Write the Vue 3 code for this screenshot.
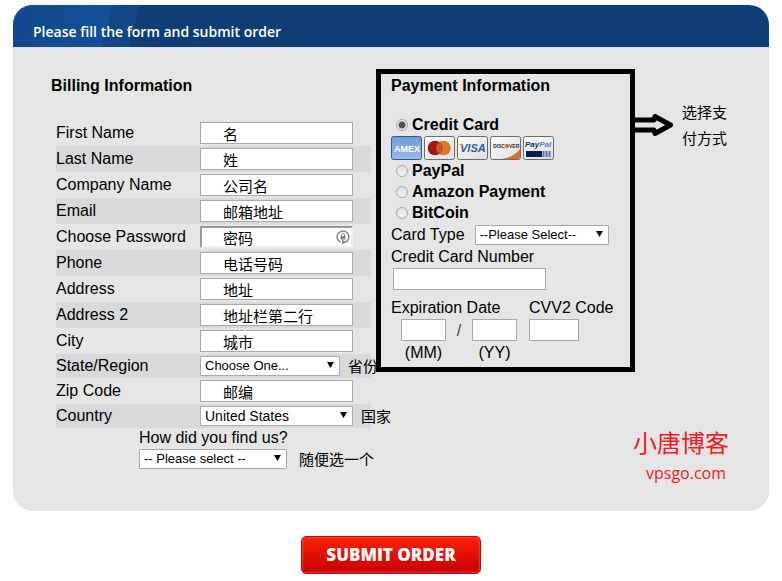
<template>
  <form class="order" @submit.prevent>
    <div class="panel">
      <header class="panel-head">Please fill the form and submit order</header>

      <div class="panel-body">
        <section class="billing">
          <h2>Billing Information</h2>
          <div class="rows">
            <div v-for="f in fields" :key="f.id" class="row" :class="{ short: f.options }">
              <label :for="f.id">{{ f.label }}</label>
              <template v-if="f.options">
                <span class="select" :class="f.size">
                  <select :id="f.id">
                    <option v-for="o in f.options" :key="o">{{ o }}</option>
                  </select>
                  <svg class="caret" viewBox="0 0 8 7"><path d="M0 0h8L4 7z" /></svg>
                </span>
                <span class="hint">{{ f.hint }}</span>
              </template>
              <span v-else class="field" :class="{ secret: f.secret }">
                <input :id="f.id" v-model="f.value" type="text" />
                <svg v-if="f.secret" class="lock" viewBox="0 0 14 14">
                  <path d="M4.500 12.200A5.900 5.900 0 1 1 9.500 12.200" fill="none" stroke="#858585" stroke-width="1.500" />
                  <path d="M6 9.800l4.500 2.200-4.500 2z" fill="#858585" />
                  <rect x="4.500" y="6" width="5" height="3.600" fill="#858585" />
                  <path d="M5.500 6.200V5a1.500 1.500 0 0 1 3 0v1.200" fill="none" stroke="#858585" />
                </svg>
              </span>
            </div>
          </div>
          <div class="found">
            <label for="found">How did you find us?</label>
            <div class="found-line">
              <span class="select">
                <select id="found">
                  <option>-- Please select --</option>
                </select>
                <svg class="caret" viewBox="0 0 8 7"><path d="M0 0h8L4 7z" /></svg>
              </span>
              <span class="hint">随便选一个</span>
            </div>
          </div>
        </section>

        <section class="payment">
          <h2>Payment Information</h2>
          <template v-for="m in methods" :key="m">
            <label class="method">
              <input v-model="method" type="radio" name="method" :value="m" />
              {{ m }}
            </label>
            <div v-if="m === 'Credit Card'" class="cards">
              <svg viewBox="0 0 31 24">
                <defs>
                  <linearGradient id="amex" x1="0" y1="0" x2="0" y2="1">
                    <stop offset="0" stop-color="#6c9bd8" />
                    <stop offset="1" stop-color="#9dbdea" />
                  </linearGradient>
                </defs>
                <rect x=".5" y=".5" width="30" height="23" rx="2" fill="url(#amex)" stroke="#2f5c9c" />
                <text x="3" y="16" class="logo amex">AMEX</text>
              </svg>
              <svg viewBox="0 0 31 24">
                <defs>
                  <linearGradient id="paper" x1="0" y1="0" x2="1" y2="1">
                    <stop offset="0" stop-color="#fff" />
                    <stop offset="1" stop-color="#dcdcdc" />
                  </linearGradient>
                </defs>
                <rect x=".5" y=".5" width="30" height="23" rx="2" fill="url(#paper)" stroke="#6b6b6b" />
                <circle cx="19.500" cy="12" r="7.300" fill="#da7a2c" />
                <circle cx="11" cy="12" r="7.300" fill="#a8141c" />
                <path d="M15.300 6a7.300 7.300 0 0 1 0 12a7.300 7.300 0 0 1 0-12" fill="#c04a22" />
                <path d="M13 9h4M12 11h5M12 13h5M13 15h4" stroke="#d98042" stroke-width=".7" />
              </svg>
              <svg viewBox="0 0 31 24">
                <rect x=".5" y=".5" width="30" height="23" rx="2" fill="url(#paper)" stroke="#6b6b6b" />
                <text x="3" y="16" class="logo visa">VISA</text>
                <path d="M2 8h4l1 4z" fill="#dd8d2c" />
              </svg>
              <svg viewBox="0 0 31 24">
                <rect x=".5" y=".5" width="30" height="23" rx="2" fill="url(#paper)" stroke="#6b6b6b" />
                <path d="M12 23Q24 21 30 13v8q0 2-2 2z" fill="#d9722b" />
                <text x="3" y="12" class="logo discover">DISC</text>
                <circle cx="17" cy="10" r="2" fill="#e0641e" />
                <text x="19" y="12" class="logo discover">VER</text>
              </svg>
              <svg viewBox="0 0 31 24">
                <rect x=".5" y=".5" width="30" height="23" rx="2" fill="url(#paper)" stroke="#6b6b6b" />
                <text x="2" y="11" class="logo paypal"><tspan fill="#14306b">Pay</tspan><tspan fill="#4a86c0">Pal</tspan></text>
                <path d="M3 15h16v6H3z" fill="#0c1c54" />
                <path d="M20.500 15v6M23.500 15v6M26.500 15v6" stroke="#5673b0" stroke-width="2" />
              </svg>
            </div>
          </template>

          <div class="card-type">
            <label for="cardType">Card Type</label>
            <span class="select">
              <select id="cardType">
                <option>--Please Select--</option>
              </select>
              <svg class="caret" viewBox="0 0 8 7"><path d="M0 0h8L4 7z" /></svg>
            </span>
          </div>
          <label class="line" for="cardNumber">Credit Card Number</label>
          <input id="cardNumber" class="card-number" type="text" />

          <div class="expiry">
            <fieldset>
              <legend>Expiration Date</legend>
              <div class="dates">
                <label><input type="text" />(MM)</label>
                <span class="slash">/</span>
                <label><input type="text" />(YY)</label>
              </div>
            </fieldset>
            <label class="cvv">CVV2 Code<input type="text" /></label>
          </div>
        </section>

        <aside class="side">
          <div class="note">
            <svg viewBox="0 0 38 24">
              <path d="M0 7H19L20 3.500L35.500 12L20 20.500L19 17H0" />
            </svg>
            <p>选择支付方式</p>
          </div>
          <div class="brand">
            <strong>小唐博客</strong>
            <span>vpsgo.com</span>
          </div>
        </aside>
      </div>
    </div>

    <button class="submit" type="submit">SUBMIT ORDER</button>
  </form>
</template>

<script setup>
import { ref } from 'vue'

const fields = ref([
  { id: 'firstName', label: 'First Name', value: '名' },
  { id: 'lastName', label: 'Last Name', value: '姓' },
  { id: 'company', label: 'Company Name', value: '公司名' },
  { id: 'email', label: 'Email', value: '邮箱地址' },
  { id: 'password', label: 'Choose Password', value: '密码', secret: true },
  { id: 'phone', label: 'Phone', value: '电话号码' },
  { id: 'address', label: 'Address', value: '地址' },
  { id: 'address2', label: 'Address 2', value: '地址栏第二行' },
  { id: 'city', label: 'City', value: '城市' },
  { id: 'state', label: 'State/Region', options: ['Choose One...'], size: 'narrow', hint: '省份' },
  { id: 'zip', label: 'Zip Code', value: '邮编' },
  { id: 'country', label: 'Country', options: ['United States'], size: 'wide', hint: '国家' },
])

const methods = ['Credit Card', 'PayPal', 'Amazon Payment', 'BitCoin']
const method = ref('Credit Card')
</script>

<style>
body {
  background: #fff;
}
</style>

<style scoped>
.order {
  padding: 5px 13px 0;
  font: 16px/20px 'Liberation Sans', 'Noto Sans CJK SC', sans-serif;
  color: #000;
}

.order *,
.order {
  box-sizing: border-box;
}

.panel {
  border-radius: 20px;
  background: #e5e5e5;
  overflow: hidden;
}

.panel-head {
  padding: 17px 20px 5px;
  font: 600 14px/20px 'Open Sans', sans-serif;
  color: #fff;
  background:
    linear-gradient(105deg, #12488c 0, #14509a 96px, transparent 97px),
    linear-gradient(105deg, #134684 122px, #0f3e77 123px);
}

.panel-body {
  display: flex;
  padding: 22px 0 0 38px;
}

h2 {
  margin: 0;
  font-size: 16px;
  line-height: 24px;
}

/* billing */
.billing {
  flex: 0 0 320px;
  min-width: 0;
  margin-right: 5px;
  padding: 5px 0 42px;
}

.rows {
  padding: 22px 0 0 5px;
}

.row {
  display: flex;
  align-items: center;
  height: 26px;
  white-space: nowrap;
}

.row.short {
  height: 24px;
}

.row:nth-child(even) {
  background: #d7d9da;
}

.row > label {
  flex: 0 0 144px;
}

input[type='text'] {
  display: block;
  height: 22px;
  margin: 0;
  padding: 0;
  border: 1px solid #a9a9a9;
  border-radius: 0;
  background: #fff;
  font: inherit;
  color: #000;
  outline: none;
}

.field {
  position: relative;
  width: 153px;
}

.field input[type='text'] {
  width: 100%;
  padding: 0 0 0 22px;
  font: 15px/20px 'Noto Sans CJK SC', sans-serif;
}

.secret input[type='text'] {
  padding-left: 21px;
  border: 2px solid;
  border-color: #999 #eee #eee #999;
}

.lock {
  position: absolute;
  top: 4px;
  right: 3px;
  width: 14px;
  height: 14px;
}

.select {
  position: relative;
  display: block;
  flex: none;
  width: 148px;
}

.select.narrow {
  width: 140px;
}

.select.wide {
  width: 153px;
}

select {
  display: block;
  width: 100%;
  height: 20px;
  margin: 0;
  padding: 0 16px 0 4px;
  border: 1px solid #a9a9a9;
  border-radius: 1px;
  appearance: none;
  background: #fff;
  font: 13px/18px 'Liberation Sans', sans-serif;
  color: #000;
}

.wide select {
  font-size: 14px;
}

.caret {
  position: absolute;
  top: 6px;
  right: 6px;
  width: 7px;
  height: 6px;
  pointer-events: none;
}

.hint {
  margin-left: 8px;
  font: 15px/20px 'Noto Sans CJK SC', sans-serif;
  white-space: nowrap;
}

.found {
  padding-left: 88px;
  white-space: nowrap;
}

.found label {
  display: block;
  width: 148px;
  padding-bottom: 1px;
  text-align: center;
}

.found-line {
  display: flex;
}

.found-line .hint {
  margin-left: 12px;
}

/* payment */
.payment {
  position: relative;
  flex: 0 0 259px;
  align-self: flex-start;
  padding: 0 0 4px 10px;
  border: 5px solid #000;
}

.payment h2 {
  margin-bottom: 16px;
}

.method {
  display: flex;
  align-items: center;
  gap: 4px;
  height: 21px;
  padding-left: 5px;
  font-weight: bold;
}

.method input {
  width: 12px;
  height: 12px;
  margin: 0;
  border: 1px solid #a6a6a6;
  border-radius: 50%;
  appearance: none;
  background: linear-gradient(#e0e0e0, #f2f2f2);
}

.method input:checked {
  background: radial-gradient(circle, #555 0 3px, #eaeaea 4px);
}

.cards {
  display: flex;
  gap: 2px;
  padding-top: 1px;
}

.cards svg {
  width: 31px;
  height: 24px;
}

.logo {
  font-family: 'Liberation Sans', sans-serif;
  font-weight: bold;
}

.amex {
  font-size: 9px;
  fill: #fff;
}

.visa {
  font: italic bold 11px 'Liberation Sans', sans-serif;
  fill: #2b5fa0;
}

.discover {
  font-size: 5px;
  fill: #333;
}

.paypal {
  font: italic bold 8px 'Liberation Sans', sans-serif;
}

.card-type {
  display: flex;
  align-items: center;
  gap: 10px;
  height: 24px;
}

.card-type .select {
  width: 134px;
}

.line {
  display: block;
}

.payment .card-number {
  width: 153px;
  margin: 1px 0 8px 2px;
}

.expiry {
  display: flex;
}

fieldset {
  flex: 0 0 138px;
  margin: 0;
  padding: 0;
  border: 0;
}

legend {
  padding: 0;
  margin-bottom: 1px;
}

.dates {
  display: flex;
  padding-left: 10px;
}

.dates label {
  width: 45px;
  text-align: center;
}

.dates input[type='text'] {
  width: 45px;
  margin-bottom: 2px;
}

.slash {
  width: 26px;
  line-height: 24px;
  text-align: center;
  color: #444;
}

.cvv {
  white-space: nowrap;
}

.cvv input[type='text'] {
  width: 50px;
  margin-top: 1px;
}

/* right side */
.side {
  display: flex;
  flex: 1;
  flex-direction: column;
  justify-content: space-between;
  min-width: 0;
  padding: 30px 40px 24px 0;
}

.note {
  display: flex;
  align-items: center;
  gap: 9px;
}

.note svg {
  flex: none;
  width: 38px;
  height: 24px;
  fill: none;
  stroke: #000;
  stroke-width: 5px;
  stroke-linejoin: round;
}

.note p {
  flex: 0 0 46px;
  margin: 0;
  font: 15px/26px 'Noto Sans CJK SC', sans-serif;
}

.brand {
  display: flex;
  flex-direction: column;
  align-items: flex-end;
  color: #ed1c24;
  white-space: nowrap;
}

.brand strong {
  font: 24px/34px 'Noto Sans CJK SC', sans-serif;
}

.brand span {
  padding-right: 3px;
  font: 16px/28px 'Open Sans', sans-serif;
}

.submit {
  display: block;
  width: 180px;
  height: 38px;
  margin: 25px auto 0;
  padding: 0;
  border: 1px solid #b80d0d;
  border-radius: 5px;
  background: linear-gradient(#ff2008, #c80000);
  box-shadow: inset 0 0 2px 1px #ff6a5a80;
  font: 800 17px/36px 'Open Sans', sans-serif;
  color: #fff;
}
</style>
